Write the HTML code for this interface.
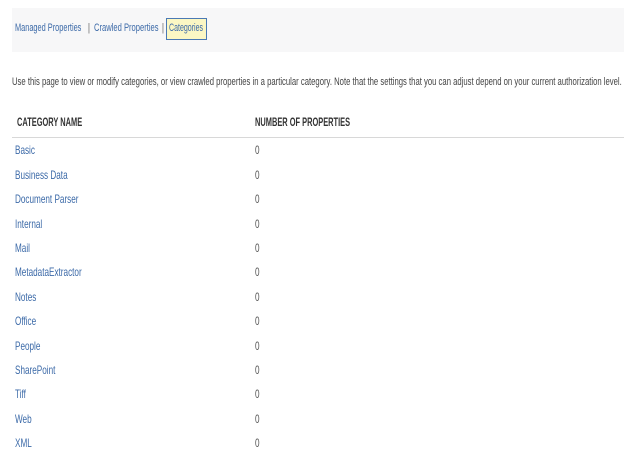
<!DOCTYPE html>
<html><head><style>
body{margin:0;width:624px;height:470px;background:#fff;font-family:"Liberation Sans",sans-serif;position:relative;overflow:hidden}
.a{position:absolute;white-space:nowrap;transform-origin:0 50%;transform:scaleX(0.68)}
.l{color:#3c6aa8;font-size:12px}
.n{color:#555;font-size:12px}
</style></head><body>
<div style="position:absolute;left:12px;top:8px;width:612px;height:44px;background:#f7f7f8"></div>
<div style="position:absolute;left:166px;top:18px;width:41px;height:22px;background:#fbf7c4;border:1px solid #4a79b4;box-sizing:border-box"></div>
<div class="a l" style="left:15px;top:22px;font-size:11px;transform:scaleX(0.67)">Managed Properties</div>
<div class="a n" style="left:88px;top:22px;font-size:11px">|</div>
<div class="a l" style="left:94px;top:22px;font-size:11px;transform:scaleX(0.69)">Crawled Properties</div>
<div class="a n" style="left:162px;top:22px;font-size:11px">|</div>
<div class="a l" style="left:169px;top:22px;font-size:11px;transform:scaleX(0.64)">Categories</div>
<div class="a" style="left:12px;top:76px;font-size:11px;color:#444;transform:scaleX(0.70)">Use this page to view or modify categories, or view crawled properties in a particular category. Note that the settings that you can adjust depend on your current authorization level.</div>
<div class="a" style="left:17px;top:115px;font-size:12px;font-weight:bold;color:#333;transform:scaleX(0.62)">CATEGORY NAME</div>
<div class="a" style="left:255px;top:115px;font-size:12px;font-weight:bold;color:#333;transform:scaleX(0.62)">NUMBER OF PROPERTIES</div>
<div style="position:absolute;left:12px;top:137px;width:612px;height:1px;background:#d8d8d8"></div>
<div class="a l" style="left:15px;top:143px">Basic</div><div class="a n" style="left:255px;top:143px">0</div>
<div class="a l" style="left:15px;top:168px">Business Data</div><div class="a n" style="left:255px;top:168px">0</div>
<div class="a l" style="left:15px;top:192px">Document Parser</div><div class="a n" style="left:255px;top:192px">0</div>
<div class="a l" style="left:15px;top:217px">Internal</div><div class="a n" style="left:255px;top:217px">0</div>
<div class="a l" style="left:15px;top:241px">Mail</div><div class="a n" style="left:255px;top:241px">0</div>
<div class="a l" style="left:15px;top:265px">MetadataExtractor</div><div class="a n" style="left:255px;top:265px">0</div>
<div class="a l" style="left:15px;top:290px">Notes</div><div class="a n" style="left:255px;top:290px">0</div>
<div class="a l" style="left:15px;top:314px">Office</div><div class="a n" style="left:255px;top:314px">0</div>
<div class="a l" style="left:15px;top:339px">People</div><div class="a n" style="left:255px;top:339px">0</div>
<div class="a l" style="left:15px;top:363px">SharePoint</div><div class="a n" style="left:255px;top:363px">0</div>
<div class="a l" style="left:15px;top:387px">Tiff</div><div class="a n" style="left:255px;top:387px">0</div>
<div class="a l" style="left:15px;top:412px">Web</div><div class="a n" style="left:255px;top:412px">0</div>
<div class="a l" style="left:15px;top:436px">XML</div><div class="a n" style="left:255px;top:436px">0</div>
</body></html>
